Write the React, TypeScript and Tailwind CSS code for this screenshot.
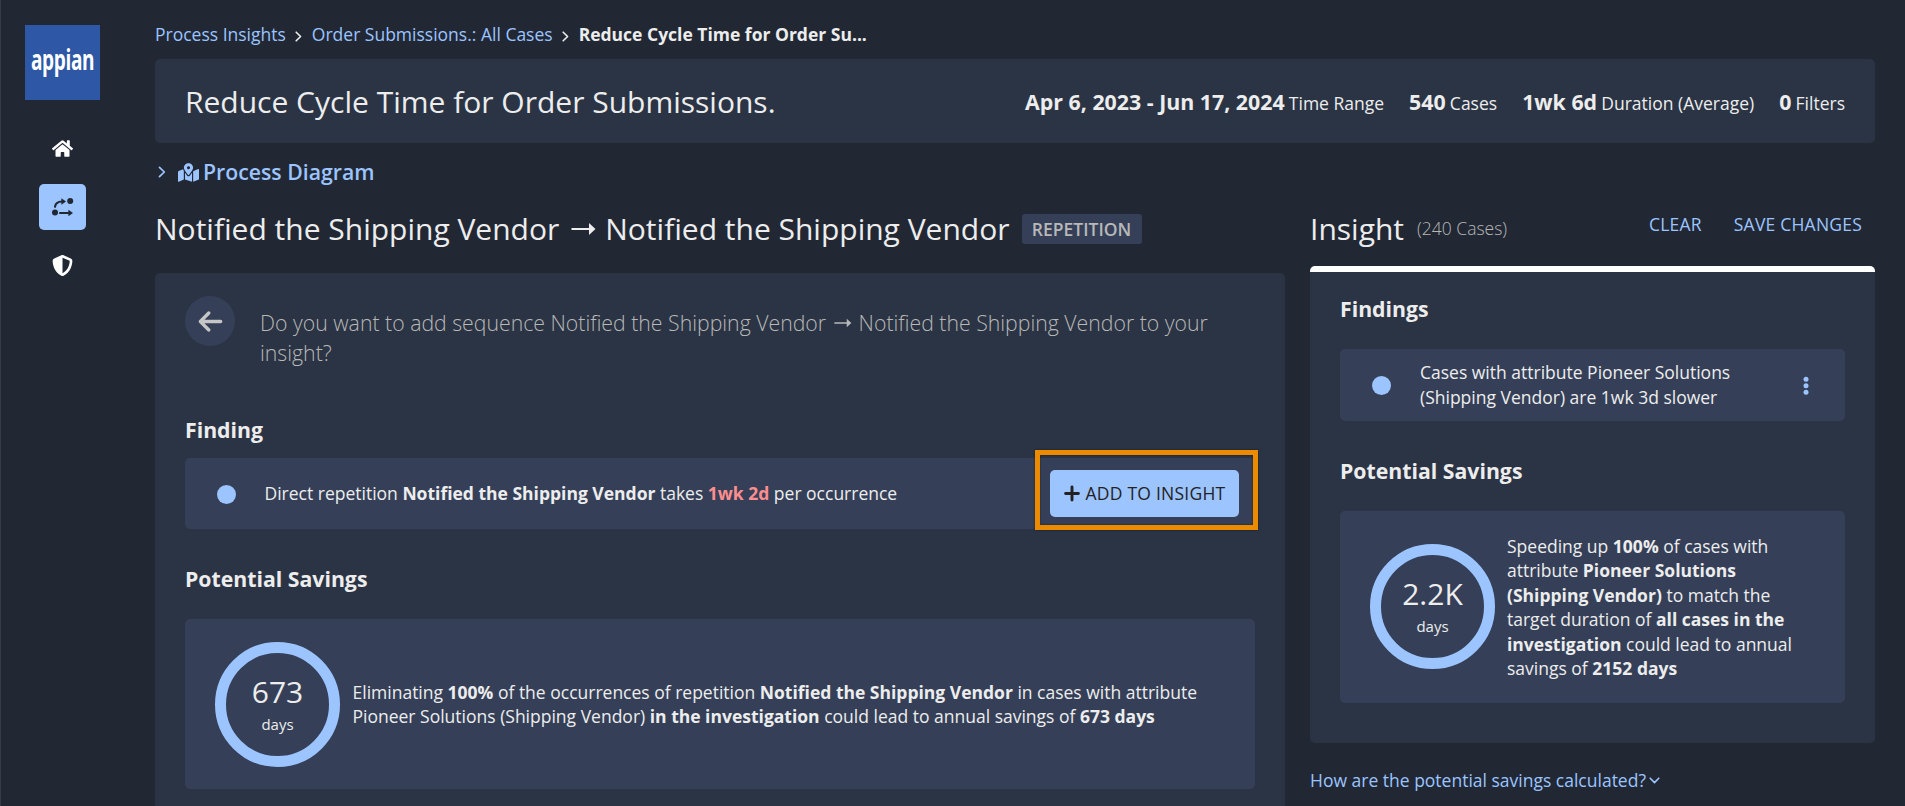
import type { ReactNode } from "react";
import { FaHome, FaMapMarkedAlt } from "react-icons/fa";
import { FaArrowLeft, FaShieldHalved } from "react-icons/fa6";

function ProcessIcon() {
  return (
    <svg width="22" height="20" viewBox="0 0 22 20" fill="#212834">
      <circle cx="18.2" cy="4" r="3" />
      <circle cx="3" cy="15.6" r="3" />
      <path d="M3 9.8C3.4 6.3 5.4 4.6 10 4.5" fill="none" stroke="#212834" strokeWidth="2.1" strokeLinecap="round" />
      <path d="M9.4 1.2 14 4.5 9.4 7.8Z" />
      <path d="M8 16h9" fill="none" stroke="#212834" strokeWidth="2.1" strokeLinecap="round" />
      <path d="M16.4 12.8 21 16l-4.6 3.2Z" />
    </svg>
  );
}

function PlusIcon() {
  return (
    <svg width="16" height="17" viewBox="0 0 16 17" fill="none" stroke="currentColor" strokeWidth="2.9" strokeLinecap="round" className="mr-[6px]">
      <path d="M8 2v13M1.6 8.5h12.8" />
    </svg>
  );
}

function Chevron({ className }: { className: string }) {
  return (
    <svg viewBox="0 0 7 11" fill="none" stroke="currentColor" strokeWidth="1.6" strokeLinecap="round" strokeLinejoin="round" className={className}>
      <path d="M1.2 1.2 5.6 5.5 1.2 9.8" />
    </svg>
  );
}

function SequenceArrow() {
  return (
    <svg viewBox="0 0 25 14" fill="currentColor" className="mr-[0.06em] ml-[0.12em] inline-block h-[0.467em] w-[0.833em] align-[0.14em]">
      <path d="M0.5 5.9H18V1L24.5 7 18 13V8.1H0.5Z" />
    </svg>
  );
}

function Sidebar() {
  return (
    <nav className="flex w-[123px] shrink-0 flex-col items-center pt-[25px]">
      <div className="flex h-[75px] w-[75px] items-center justify-center bg-[#2e57a5] pb-[8px]">
        <span className="scale-x-[0.68] text-[28px] leading-[40px] font-bold tracking-[-0.5px] text-white">appian</span>
      </div>
      <div className="mt-[25px] mb-[13px] flex h-[46px] w-[47px] items-center justify-center pt-px text-white">
        <FaHome size={21} />
      </div>
      <div className="flex h-[46px] w-[47px] items-center justify-center rounded-[5px] bg-[#9cc4ff]">
        <ProcessIcon />
      </div>
      <div className="mt-3 flex h-[46px] w-[47px] items-center justify-center pt-px text-white">
        <FaShieldHalved size={21} />
      </div>
    </nav>
  );
}

function Stat({ value, label }: { value: string; label: string }) {
  return (
    <span className="whitespace-nowrap">
      <b className="text-[21.35px] font-bold">{value}</b> <span className="text-[17.5px]">{label}</span>
    </span>
  );
}

function Ring({ value }: { value: string }) {
  return (
    <div className="flex h-[125px] w-[125px] shrink-0 flex-col items-center rounded-full border-[11px] border-[#9cc4ff] pt-[18px]">
      <span className="text-[30px] leading-[41px]">{value}</span>
      <span className="mt-[2px] text-[15px] leading-[20px]">days</span>
    </div>
  );
}

function Dot() {
  return <span className="h-[19px] w-[19px] shrink-0 rounded-full bg-[#9cc4ff]" />;
}

function Heading({ children }: { children: ReactNode }) {
  return <h2 className="text-[21.25px] leading-[30px] font-bold">{children}</h2>;
}

function InsightPanel() {
  return (
    <aside className="flex w-[565px] shrink-0 flex-col">
      <div className="flex h-[68px] items-start">
        <h1 className="mt-[10px] text-[30px] leading-[42px]">Insight</h1>
        <span className="mt-[16px] ml-[13px] text-[17.5px] leading-[28px] font-light text-[#b8b8b8]">(240 Cases)</span>
        <span className="mt-[14px] mr-[13px] ml-auto flex gap-[32px] text-[17.5px] leading-[24px] font-medium tracking-[0.22px] text-[#9cc4ff]">
          <span>CLEAR</span>
          <span>SAVE CHANGES</span>
        </span>
      </div>
      <section className="h-[477px] overflow-hidden rounded-[5px] bg-[#2b3444]">
        <div className="h-[6px] bg-white" />
        <div className="px-[30px] pt-[22px]">
          <Heading>Findings</Heading>
          <div className="mt-[25px] flex h-[72px] items-center rounded-[5px] bg-[#354058] pr-[36px] pl-[32px]">
            <Dot />
            <p className="ml-[29px] text-[17.5px] leading-[25px]">
              Cases with attribute Pioneer Solutions
              <br />
              (Shipping Vendor) are 1wk 3d slower
            </p>
            <svg className="mt-px ml-auto" width="6" height="20" viewBox="0 0 6 20" fill="#9cc4ff">
              <circle cx="3" cy="3.2" r="2.5" />
              <circle cx="3" cy="9.7" r="2.5" />
              <circle cx="3" cy="16.2" r="2.5" />
            </svg>
          </div>
          <div className="mt-[35px]">
            <Heading>Potential Savings</Heading>
          </div>
          <div className="mt-[25px] flex h-[192px] items-center rounded-[5px] bg-[#354058] pb-[2px] pl-[30px]">
            <Ring value="2.2K" />
            <p className="ml-[12px] pt-[2px] text-[17.5px] leading-[24.5px] whitespace-nowrap">
              Speeding up <b>100%</b> of cases with
              <br />
              attribute <b>Pioneer Solutions</b>
              <br />
              <b>(Shipping Vendor)</b> to match the
              <br />
              target duration of <b>all cases in the</b>
              <br />
              <b>investigation</b> could lead to annual
              <br />
              savings of <b>2152 days</b>
            </p>
          </div>
        </div>
      </section>
      <div className="mt-[25px] flex items-center text-[17.5px] leading-[24px] text-[#9cc4ff]">
        How are the potential savings calculated?
        <Chevron className="ml-[5px] h-[11px] w-[7px] rotate-90" />
      </div>
    </aside>
  );
}

function MainPanel() {
  return (
    <div className="flex w-[1130px] shrink-0 flex-col">
      <div className="flex h-[75px] items-start">
        <h1 className="mt-[10px] text-[30px] leading-[42px] whitespace-nowrap">
          Notified the Shipping Vendor <SequenceArrow /> Notified the Shipping Vendor
        </h1>
        <span className="mt-[16px] ml-[12px] flex h-[30px] w-[120px] items-center justify-center rounded-[3px] bg-[#354058] text-[17.5px] font-semibold text-[#b8b8b8]">
          REPETITION
        </span>
      </div>
      <section className="flex-1 rounded-t-[5px] bg-[#2b3444] px-[30px] pt-[23px]">
        <div className="flex h-[100px]">
          <span className="flex h-[50px] w-[50px] items-center justify-center rounded-full bg-[#354058] text-[#c6c6c6]">
            <FaArrowLeft size={27} />
          </span>
          <p className="mt-[12px] ml-[25px] text-[21.25px] leading-[30px] font-light whitespace-nowrap text-[#b8b8b8]">
            Do you want to add sequence Notified the Shipping Vendor <SequenceArrow /> Notified the Shipping Vendor to
            your
            <br />
            insight?
          </p>
        </div>
        <div className="mt-[19px]">
          <Heading>Finding</Heading>
        </div>
        <div className="relative mt-[13px] flex h-[71px] items-center rounded-[5px] bg-[#354058] pr-[16px] pl-[32px]">
          <span className="flex pt-px">
            <Dot />
          </span>
          <p className="ml-[28.5px] pb-px text-[17.5px] leading-[24px]">
            Direct repetition <b>Notified the Shipping Vendor</b> takes <b className="text-[#ff8e8e]">1wk 2d</b> per
            occurrence
          </p>
          <button className="ml-auto flex h-[47px] w-[189px] items-center justify-center rounded-[5px] bg-[#9cc4ff] text-[17.5px] font-medium tracking-[0.24px] text-[#222]">
            <PlusIcon />
            ADD TO INSIGHT
          </button>
          <span className="absolute -top-[8px] -right-[3px] h-[80px] w-[223px] border-[5px] border-[#ec8b00] shadow-[0_0_2px_rgba(0,0,0,0.5),inset_0_0_2px_rgba(0,0,0,0.5)]" />
        </div>
        <div className="mt-[35px]">
          <Heading>Potential Savings</Heading>
        </div>
        <div className="mt-[25px] flex h-[170px] items-center rounded-[5px] bg-[#354058] pl-[30px]">
          <Ring value="673" />
          <p className="ml-[12.5px] text-[17.5px] leading-[24.5px] whitespace-nowrap">
            Eliminating <b>100%</b> of the occurrences of repetition <b>Notified the Shipping Vendor</b> in cases with
            attribute
            <br />
            Pioneer Solutions (Shipping Vendor) <b>in the investigation</b> could lead to annual savings of{" "}
            <b>673 days</b>
          </p>
        </div>
      </section>
    </div>
  );
}

export default function App() {
  return (
    <div className="flex h-[806px] w-[1905px] overflow-hidden border-l border-[#343c49] bg-[#212834] font-['Open_Sans',sans-serif] text-[#ededed]">
      <Sidebar />
      <main className="ml-[31px] flex w-[1720px] flex-col">
        <div className="flex h-[59px] items-center pt-[9px] text-[17.5px] leading-[24px] text-[#9cc4ff]">
          <span>Process Insights</span>
          <Chevron className="mt-[4px] mr-[9.5px] ml-[9.5px] h-[11px] w-[7px] text-[#ededed]" />
          <span>Order Submissions.: All Cases</span>
          <Chevron className="mt-[4px] mr-[9.5px] ml-[9.5px] h-[11px] w-[7px] text-[#ededed]" />
          <b className="text-[#ededed]">Reduce Cycle Time for Order Su...</b>
        </div>
        <header className="flex h-[84px] shrink-0 items-center justify-between rounded-[5px] bg-[#2b3444] px-[30px] pt-[2px]">
          <h1 className="text-[30px] leading-[42px]">Reduce Cycle Time for Order Submissions.</h1>
          <div className="flex items-center gap-[25px] pt-[2px] leading-[30px]">
            <Stat value="Apr 6, 2023 - Jun 17, 2024" label="Time Range" />
            <Stat value="540" label="Cases" />
            <Stat value="1wk 6d" label="Duration (Average)" />
            <Stat value="0" label="Filters" />
          </div>
        </header>
        <div className="flex h-[55px] shrink-0 items-center pt-[3px] text-[21.25px] leading-[30px] font-semibold text-[#9cc4ff]">
          <Chevron className="ml-[3px] h-[12px] w-[8px]" />
          <FaMapMarkedAlt size={21} className="mr-[4px] ml-[12px]" />
          Process Diagram
        </div>
        <div className="flex flex-1 gap-[25px]">
          <MainPanel />
          <InsightPanel />
        </div>
      </main>
    </div>
  );
}
